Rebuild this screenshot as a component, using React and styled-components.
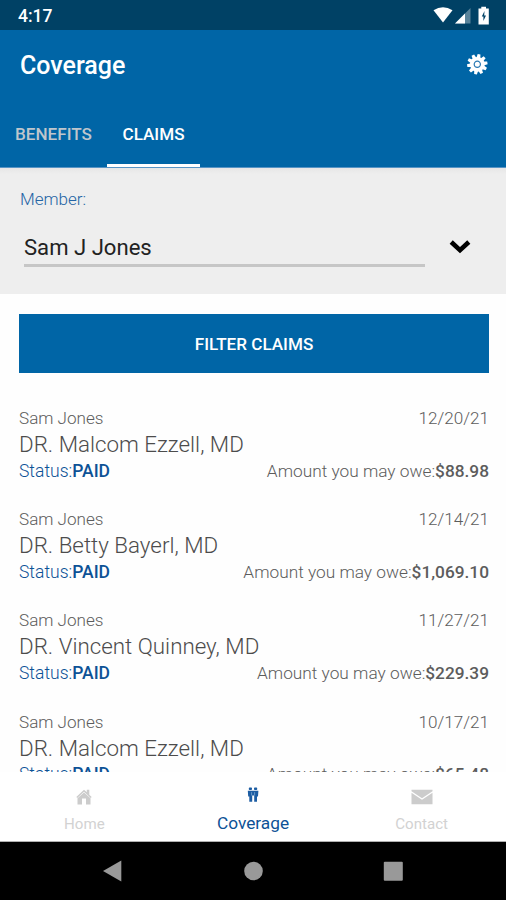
import styled, { createGlobalStyle } from "styled-components"

const claims = [
    { date: "12/20/21", doctor: "DR. Malcom Ezzell, MD", amount: "$88.98" },
    { date: "12/14/21", doctor: "DR. Betty Bayerl, MD", amount: "$1,069.10" },
    { date: "11/27/21", doctor: "DR. Vincent Quinney, MD", amount: "$229.39" },
    { date: "10/17/21", doctor: "DR. Malcom Ezzell, MD", amount: "$65.48" },
]

const teeth = [0, 36, 72, 108, 144, 180, 216, 252, 288, 324]

export default function App() {
    return (
        <>
            <GlobalStyle />
            <Screen>
                <StatusBar>
                    <Clock>4:17</Clock>
                    <StatusIcons />
                </StatusBar>
                <Header>
                    <TitleRow>
                        <Title>Coverage</Title>
                        <GearIcon />
                    </TitleRow>
                    <Tabs>
                        <Tab $width="107px">BENEFITS</Tab>
                        <Tab $width="93px" $active>CLAIMS</Tab>
                    </Tabs>
                </Header>
                <MemberPanel>
                    <MemberLabel>Member:</MemberLabel>
                    <MemberRow>
                        <MemberSelect>Sam J Jones</MemberSelect>
                        <svg width="22" height="16" viewBox="0 0 22 16">
                            <path d="M2.2 4L11 12.2L19.8 4" fill="none" stroke="#000" strokeWidth="4.6" />
                        </svg>
                    </MemberRow>
                </MemberPanel>
                <Content>
                    <FilterButton>FILTER CLAIMS</FilterButton>
                    {claims.map((claim) => (
                        <Claim key={claim.date}>
                            <ClaimRow>
                                <span>Sam Jones</span>
                                <span>{claim.date}</span>
                            </ClaimRow>
                            <Doctor>{claim.doctor}</Doctor>
                            <ClaimRow $size="17.3px">
                                <Status>Status:<Bold>PAID</Bold></Status>
                                <span>Amount you may owe:<Bold>{claim.amount}</Bold></span>
                            </ClaimRow>
                        </Claim>
                    ))}
                </Content>
                <BottomNav>
                    <NavItem>
                        <HomeIcon />
                        <NavLabel>Home</NavLabel>
                    </NavItem>
                    <NavItem $active>
                        <CoverageIcon />
                        <NavLabel $active>Coverage</NavLabel>
                    </NavItem>
                    <NavItem>
                        <MailIcon />
                        <NavLabel>Contact</NavLabel>
                    </NavItem>
                </BottomNav>
                <SystemBar>
                    <svg width="20" height="22" viewBox="0 0 20 22">
                        <path d="M0 11L18.3 0.6V21.4Z" />
                    </svg>
                    <svg width="20" height="20" viewBox="0 0 20 20">
                        <circle cx="10.5" cy="10" r="9.3" />
                    </svg>
                    <svg width="20" height="20" viewBox="0 0 20 20">
                        <rect x="0.8" y="0.7" width="19" height="19" rx="1" />
                    </svg>
                </SystemBar>
            </Screen>
        </>
    )
}

function StatusIcons() {
    return (
        <svg width="58" height="20" viewBox="0 0 58 20" fill="#fff">
            <path d="M0.5 4.3Q10 -1.9 19.5 4.3L10 16.5Z" />
            <path d="M22 17.5L37.5 2V17.5Z" fillOpacity="0.35" />
            <path d="M22 17.5L32 7.5V17.5Z" />
            <path d="M45.5 2.5H48.3V0.8H53V2.5H55.8V18.5H45.5Z" />
            <path d="M51.5 5L48.8 10.5H50.4V15L53 9.5H51.2Z" fill="#004165" />
        </svg>
    )
}

function GearIcon() {
    return (
        <svg width="22" height="22" viewBox="-11.3 -11.3 22 22" fill="#fff">
            <circle r="7.4" />
            {teeth.map((angle) => (
                <path key={angle} d="M-2 -6L-1.4 -10.2H1.4L2 -6Z" transform={`rotate(${angle + 10})`} />
            ))}
            <circle r="3.1" fill="none" stroke="#2878b3" strokeWidth="1.2" />
        </svg>
    )
}

function HomeIcon() {
    return (
        <svg width="16" height="16" viewBox="0 0 16 16" fill="#ccc">
            <path d="M0.3 8L8 0.8L10.8 3.3V0.8H13.3V5.7L15.7 8L14.7 9L8 2.8L1.3 9Z" />
            <path d="M1.5 9.2L8 3.5L14.5 9.2V15.5H10V9.5H6V15.5H1.5Z" />
        </svg>
    )
}

function CoverageIcon() {
    return (
        <svg width="12" height="16" viewBox="0 0 12 16" fill="#1d5da3">
            <rect x="1.8" y="0.6" width="3.2" height="2.4" rx="0.8" />
            <rect x="7" y="0.6" width="3.2" height="2.4" rx="0.8" />
            <path d="M0.8 3.8H11.4L11 9.5H10V14.8H7.2V8.5H5.2V14.8H2.3V9.5H1.2Z" />
            <path d="M4.6 5.2V8.5M7.6 5.2V8.5" stroke="#8db4d8" strokeWidth="0.7" />
        </svg>
    )
}

function MailIcon() {
    return (
        <svg width="22" height="16" viewBox="0 0 22 16" fill="#ccc">
            <path d="M0.5 0.8H21.5V2.3L11 9.2L0.5 2.3Z" />
            <path d="M0.5 3.8L11 10.7L21.5 3.8V15.3H0.5Z" />
        </svg>
    )
}

const GlobalStyle = createGlobalStyle`
    * {
        box-sizing: border-box;
    }

    body {
        margin: 0;
        font-family: 'Roboto', sans-serif;
    }
`

const Screen = styled.div`
    display: flex;
    flex-direction: column;
    width: 506px;
    height: 900px;
    overflow: hidden;
    background-color: #fefefe;
`

const StatusBar = styled.div`
    display: flex;
    justify-content: space-between;
    align-items: center;
    flex-shrink: 0;
    height: 30px;
    padding: 1px 15px 0 18px;
    background-color: #004165;
`

const Clock = styled.span`
    color: #ffffff;
    font-size: 17.5px;
    font-weight: 500;
    line-height: 30px;
`

const Header = styled.div`
    flex-shrink: 0;
    height: 138px;
    background-color: #0065a6;
    border-bottom: 1px solid #5794c5;
`

const TitleRow = styled.div`
    display: flex;
    justify-content: space-between;
    height: 70px;
    padding: 23px 18px 0 20px;
`

const Title = styled.h1`
    margin: 0;
    color: #ffffff;
    font-size: 25px;
    font-weight: 500;
    line-height: 26px;
`

const Tabs = styled.div`
    display: flex;
    height: 67px;
`

const Tab = styled.div`
    width: ${(props) => props.$width};
    padding-top: 24px;
    color: ${(props) => (props.$active ? "#ffffff" : "#bfc6cc")};
    border-bottom: 3px solid ${(props) => (props.$active ? "#ffffff" : "transparent")};
    font-size: 17.1px;
    font-weight: 500;
    line-height: 20px;
    text-align: center;
`

const MemberPanel = styled.div`
    flex-shrink: 0;
    height: 126px;
    padding: 20px 35px 0 20px;
    background: linear-gradient(#e6e6e6, #eeeeee 6px);
`

const MemberLabel = styled.div`
    color: #2565a5;
    font-size: 17px;
    font-weight: 300;
    line-height: 22px;
`

const MemberRow = styled.div`
    display: flex;
    justify-content: space-between;
    align-items: center;
    padding-left: 4px;
    margin-top: 14px;
`

const MemberSelect = styled.div`
    width: 401px;
    height: 43px;
    border-bottom: 3px solid #c6c6c6;
    color: #222222;
    font-size: 22.1px;
    line-height: 46px;
`

const Content = styled.div`
    flex: 1;
    min-height: 0;
    overflow: hidden;
    padding: 20px 17px 0 19px;
`

const FilterButton = styled.button`
    display: block;
    width: 470px;
    height: 59px;
    margin-bottom: 32px;
    background-color: #0065a6;
    color: #ffffff;
    border: none;
    font-family: inherit;
    font-size: 17.1px;
    font-weight: 500;
`

const Claim = styled.div`
    height: 101.2px;
`

const ClaimRow = styled.div`
    display: flex;
    justify-content: space-between;
    color: #5c5c5c;
    font-size: ${(props) => props.$size || "17.1px"};
    font-weight: 300;
    line-height: 26px;
`

const Doctor = styled.div`
    color: #4c4c4c;
    font-size: 22.35px;
    font-weight: 300;
    line-height: 26.5px;
`

const Status = styled.span`
    color: #0d5296;
    font-size: 17.5px;
`

const Bold = styled.b`
    font-weight: 500;
`

const BottomNav = styled.div`
    display: flex;
    flex-shrink: 0;
    height: 70px;
    border-bottom: 1px solid #b0b0b0;
    background-color: #ffffff;
`

const NavItem = styled.div`
    display: flex;
    flex: 1;
    flex-direction: column;
    align-items: center;
    padding-top: ${(props) => (props.$active ? "15px" : "17px")};
`

const NavLabel = styled.span`
    margin-top: ${(props) => (props.$active ? "10px" : "9px")};
    color: ${(props) => (props.$active ? "#0d5296" : "#d2d2d2")};
    font-size: ${(props) => (props.$active ? "17.3px" : "15.1px")};
    line-height: 20px;
`

const SystemBar = styled.div`
    display: flex;
    flex-shrink: 0;
    justify-content: space-between;
    align-items: center;
    height: 58px;
    padding: 0 103px;
    background-color: #000000;
    fill: #999999;
`
